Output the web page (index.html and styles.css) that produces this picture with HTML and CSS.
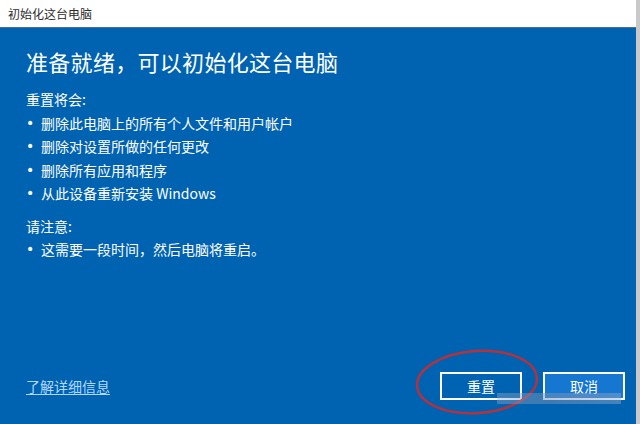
FILE: index.html
```html
<!DOCTYPE html>
<html lang="zh-CN">

<head>
    <meta charset="UTF-8">
    <meta name="viewport" content="width=device-width, initial-scale=1.0">
    <title>初始化这台电脑</title>

    <link rel="stylesheet" href="styles.css">
</head>

<body>
    <div class="window">
        <div class="titlebar">初始化这台电脑</div>
        <div class="content">
            <h1 class="heading">准备就绪，可以初始化这台电脑</h1>

            <p class="label">重置将会:</p>
            <ul class="items">
                <li>删除此电脑上的所有个人文件和用户帐户</li>
                <li>删除对设置所做的任何更改</li>
                <li>删除所有应用和程序</li>
                <li>从此设备重新安装 Windows</li>
            </ul>

            <p class="label note">请注意:</p>
            <ul class="items">
                <li>这需要一段时间，然后电脑将重启。</li>
            </ul>

            <div class="footer">
                <a class="more" href="#">了解详细信息</a>
                <div class="buttons">
                    <button class="btn reset">重置</button>
                    <button class="btn cancel">取消</button>
                </div>

                <!-- red circle someone drew round the button -->
                <svg class="circle" width="140" height="76" viewBox="0 0 140 76">
                    <ellipse cx="70" cy="38" rx="60" ry="31" fill="none" stroke="#b3323d" stroke-width="2.5"
                        transform="rotate(-4 70 38)" />
                </svg>
                <div class="smudge"></div>
            </div>
        </div>
    </div>
</body>

</html>
```

FILE: styles.css
```css
body {
    margin: 0;
    width: 640px;
    height: 424px;
    overflow: hidden;
    background-color: #c9c9c9;
    font-family: 'Noto Sans CJK SC', 'Noto Sans', sans-serif;
}

.window {
    width: 636px;
    height: 424px;
    display: flex;
    flex-direction: column;
}

.titlebar {
    height: 28px;
    line-height: 28px;
    padding-left: 8px;
    background-color: #fff;
    color: #2b2b2b;
    font-size: 12px;
    border-bottom: 1px solid #4a6f96;
    box-sizing: border-box;
}

.content {
    flex: 1;
    display: flex;
    flex-direction: column;
    padding: 0 11px 24px 26px;
    background-color: #0063b1;
    color: #fff;
}

.heading {
    margin: 16px 0 0 0;
    font-size: 22px;
    font-weight: normal;
    line-height: 34px;
    letter-spacing: 0.3px;
}

.label {
    margin: 10px 0 0 0;
    font-size: 14px;
    line-height: 23.5px;
}

.note {
    margin-top: 9px;
}

.items {
    list-style: none;
    margin: 0;
    padding: 0;
}

.items li {
    display: flex;
    font-size: 14px;
    line-height: 23.5px;
}

.items li::before {
    content: "•";
    width: 15px;
    font-family: 'DejaVu Sans', sans-serif;
    font-size: 14px;
}

.footer {
    margin-top: auto;
    display: flex;
    justify-content: space-between;
    align-items: center;
    position: relative;
}

.more {
    color: #b0d8ff;
    font-size: 14px;
    text-decoration: underline;
    text-underline-offset: 2px;
}

.buttons {
    display: flex;
    gap: 21px;
}

.btn {
    width: 82px;
    height: 28px;
    border: 2px solid #fff;
    color: #fff;
    font-family: 'Noto Sans CJK SC', sans-serif;
    font-size: 14px;
    padding: 0;
}

.reset {
    background-color: #0063b1;
}

.cancel {
    background-color: #1577d0;
}

.circle {
    position: absolute;
    right: 78px;
    top: -28px;
}

.smudge {
    position: absolute;
    right: 4px;
    top: 21px;
    width: 124px;
    height: 11px;
    background: linear-gradient(90deg, rgba(150, 170, 200, 0.4), rgba(120, 145, 180, 0.5) 40%, rgba(150, 170, 200, 0.45));
}
```
